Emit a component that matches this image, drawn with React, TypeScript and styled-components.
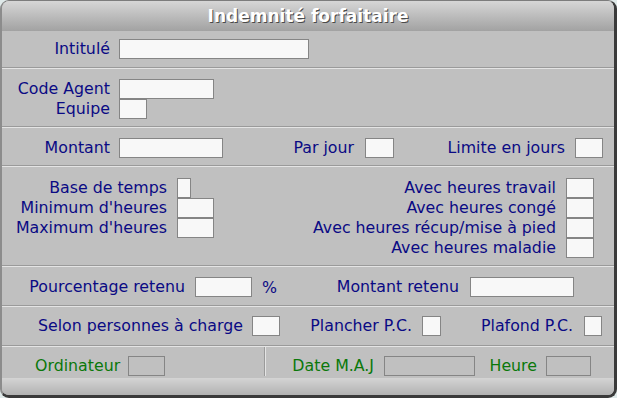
import React, { FC } from 'react';
import styled, { createGlobalStyle } from 'styled-components';

const GlobalStyle = createGlobalStyle`
  html, body {
    margin: 0;
    padding: 0;
    background: #dfe9e9;
  }
  body {
    font-family: 'DejaVu Sans', Verdana, sans-serif;
  }
`;

const Window = styled.div`
  width: 617px;
  height: 398px;
  box-sizing: border-box;
  border-radius: 9px;
  overflow: hidden;
  background: #c0c0c0;
  border-top: 1px solid #7c7c7c;
  border-left: 2px solid #8c8c8c;
  border-right: 3px solid #3a3a3a;
  border-bottom: 3px solid #3a3a3a;
  display: flex;
  flex-direction: column;
`;

const TitleBar = styled.div`
  height: 30px;
  flex: none;
  display: flex;
  align-items: center;
  justify-content: center;
  background: linear-gradient(#d6d6d6, #a2a2a2);
  color: #ffffff;
  font-weight: bold;
  font-size: 17px;
  text-shadow: 1px 1px 0 #4a4a4a;
`;

const Section = styled.div<{ $pt: number; $pb: number; $pr?: number }>`
  flex: none;
  display: flex;
  padding: ${p => p.$pt}px ${p => p.$pr || 0}px ${p => p.$pb}px 0;
`;

const Column = styled.div<{ $w: number }>`
  display: flex;
  flex-direction: column;
  width: ${p => p.$w}px;
`;

const Divider = styled.div`
  flex: none;
  height: 2px;
  box-sizing: border-box;
  border-top: 1px solid #9a9a9a;
  border-bottom: 1px solid #e4e4e4;
`;

const Row = styled.div`
  display: flex;
  align-items: center;
  height: 20px;
`;

const Label = styled.span<{ $left?: boolean; $green?: boolean }>`
  flex: 1;
  text-align: ${p => (p.$left ? 'left' : 'right')};
  white-space: nowrap;
  font-size: 15.8px;
  line-height: 20px;
  color: ${p => (p.$green ? '#0a780a' : '#0a0a84')};
`;

const Box = styled.div<{ $w: number; $gray?: boolean }>`
  flex: none;
  width: ${p => p.$w}px;
  height: 20px;
  box-sizing: border-box;
  border: 1px solid #858585;
  background: ${p => (p.$gray ? '#c0c0c0' : '#f8f8f8')};
`;

const FieldWrap = styled.div<{ $w: number; $pl?: number }>`
  display: flex;
  align-items: center;
  width: ${p => p.$w}px;
  padding-left: ${p => p.$pl || 0}px;
  box-sizing: border-box;
`;

const Gap = styled.span<{ $g: number }>`
  width: ${p => p.$g}px;
  flex: none;
`;

const Percent = styled.span`
  width: 20px;
  padding-left: 10px;
  font-size: 15.8px;
  color: #0a0a84;
`;

const Footer = styled.div`
  flex: none;
  height: 31px;
  display: flex;
`;

const FooterPart = styled.div<{ $w?: number }>`
  padding-top: 9px;
  display: flex;
  align-items: flex-start;
  ${p => (p.$w ? `width: ${p.$w}px;` : '')}
`;

const VDivider = styled.div`
  width: 2px;
  margin-bottom: 2px;
  box-sizing: border-box;
  border-left: 1px solid #9a9a9a;
  border-right: 1px solid #e4e4e4;
`;

const BottomBar = styled.div`
  flex: 1;
  background: linear-gradient(#d4d4d4, #b2b2b2);
`;

interface FieldProps {
  label: string;
  w: number;
  iw: number;
  gap?: number;
  left?: boolean;
  green?: boolean;
  gray?: boolean;
  pl?: number;
}

const Field: FC<FieldProps> = ({ label, w, iw, gap = 10, left, green, gray, pl }) => (
  <FieldWrap $w={w} $pl={pl}>
    <Label $left={left} $green={green}>{label}</Label>
    <Gap $g={gap} />
    <Box $w={iw} $gray={gray} />
  </FieldWrap>
);

const App: FC = () => {
  return (
    <React.Fragment>
      <GlobalStyle />
      <Window>
        <TitleBar>Indemnité forfaitaire</TitleBar>

        <Section $pt={8} $pb={8}>
          <Row>
            <Field label="Intitulé" w={307} iw={190} gap={9} />
          </Row>
        </Section>
        <Divider />

        <Section $pt={10} $pb={7}>
          <Column $w={300}>
            <Row>
              <Field label="Code Agent" w={212} iw={95} gap={9} />
            </Row>
            <Row>
              <Field label="Equipe" w={145} iw={28} gap={9} />
            </Row>
          </Column>
        </Section>
        <Divider />

        <Section $pt={10} $pb={7}>
          <Row>
            <Field label="Montant" w={221} iw={104} gap={9} />
            <Field label="Par jour" w={171} iw={29} gap={11} />
            <Field label="Limite en jours" w={209} iw={28} />
          </Row>
        </Section>
        <Divider />

        <Section $pt={11} $pb={7} $pr={20}>
          <Column $w={212}>
            <Row>
              <Field label="Base de temps" w={189} iw={14} />
            </Row>
            <Row>
              <Field label="Minimum d'heures" w={212} iw={37} />
            </Row>
            <Row>
              <Field label="Maximum d'heures" w={212} iw={37} />
            </Row>
          </Column>
          <Column $w={380} style={{ alignItems: 'flex-end' }}>
            <Row>
              <Field label="Avec heures travail" w={300} iw={28} />
            </Row>
            <Row>
              <Field label="Avec heures congé" w={300} iw={28} />
            </Row>
            <Row>
              <Field label="Avec heures récup/mise à pied" w={300} iw={28} />
            </Row>
            <Row>
              <Field label="Avec heures maladie" w={300} iw={28} />
            </Row>
          </Column>
        </Section>
        <Divider />

        <Section $pt={10} $pb={8}>
          <Row>
            <Field label="Pourcentage retenu" w={250} iw={57} />
            <Percent>%</Percent>
            <Field label="Montant retenu" w={292} iw={104} gap={11} />
          </Row>
        </Section>
        <Divider />

        <Section $pt={9} $pb={9}>
          <Row>
            <Field label="Selon personnes à charge" w={278} iw={28} gap={9} />
            <Field label="Plancher P.C." w={161} iw={19} />
            <Field label="Plafond P.C." w={161} iw={18} gap={11} />
          </Row>
        </Section>
        <Divider />

        <Footer>
          <FooterPart $w={262}>
            <Row>
              <Field label="Ordinateur" w={163} iw={37} pl={33} left green gray gap={0} />
            </Row>
          </FooterPart>
          <VDivider />
          <FooterPart>
            <Row>
              <Field label="Date M.A.J" w={209} iw={91} green gray />
              <Field label="Heure" w={116} iw={45} gap={9} green gray />
            </Row>
          </FooterPart>
        </Footer>
        <BottomBar />
      </Window>
    </React.Fragment>
  );
};

export default App;
